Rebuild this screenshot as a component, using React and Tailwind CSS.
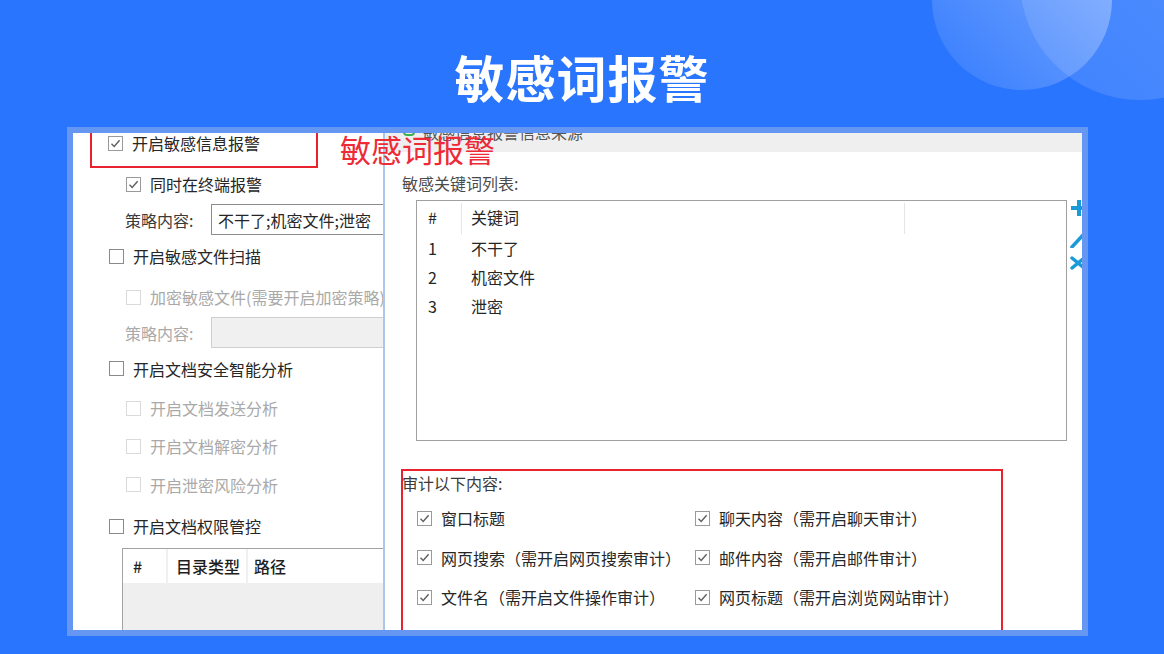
import React from "react";

const font = { fontFamily: '"Noto Sans CJK SC", "Noto Sans", sans-serif' };

function Box({ checked, disabled }) {
  const border = disabled ? "border-[#dadada]" : checked ? "border-[#9a9a9a]" : "border-[#8a8a8a]";
  return (
    <div className={`w-[15px] h-[15px] shrink-0 border bg-white flex items-center justify-center ${border}`}>
      {checked && (
        <svg width="11" height="11" viewBox="0 0 11 11">
          <path d="M1.5 5.8 L4.2 8.4 L9.6 2.2" fill="none" stroke="#5f5f5f" strokeWidth="1.4" />
        </svg>
      )}
    </div>
  );
}

function Check({ label, checked, disabled, className = "" }) {
  return (
    <div className={`flex items-center gap-[9px] ${className}`}>
      <Box checked={checked} disabled={disabled} />
      <span className={`text-[16px] whitespace-nowrap ${disabled ? "text-[#a9a9a9]" : "text-[#262626]"}`}>{label}</span>
    </div>
  );
}

export default function App() {
  return (
    <div className="relative w-[1164px] h-[654px] overflow-hidden bg-[#2a75fe]" style={font}>
      {/* decorative circles */}
      <div className="absolute left-[1020px] top-[-140px] w-[240px] h-[240px] rounded-full bg-linear-to-tr from-white/10 to-white/20" />
      <div className="absolute left-[932px] top-[-90px] w-[180px] h-[180px] rounded-full bg-linear-to-tr from-white/5 to-white/40" />

      <div className="relative flex flex-col">
        <h1 className="mt-[51px] h-[50px] self-center text-[50px] leading-[50px] font-bold text-white tracking-[1px]">敏感词报警</h1>

        {/* screenshot frame */}
        <div className="mt-[26px] ml-[67px] w-[1021px] border-[6px] border-[#6596f1]">
          <div className="relative flex h-[497px] overflow-hidden bg-white">
            {/* left panel */}
            <div className="w-[310px] shrink-0 overflow-hidden flex flex-col">
              <div className="-mt-[6px] ml-[17px] w-[228px] h-[41px] shrink-0 border-2 border-[#e8232e] flex items-center pl-[16px] pb-[9px]">
                <Check label="开启敏感信息报警" checked />
              </div>
              <Check label="同时在终端报警" checked className="h-[32px] pl-[53px] shrink-0" />
              <div className="mt-[4px] h-[31px] shrink-0 flex items-center pl-[52px]">
                <span className="w-[86px] shrink-0 whitespace-nowrap text-[16px] text-[#3a3a3a]">策略内容:</span>
                <div className="w-[300px] h-[31px] shrink-0 border border-[#8d8d8d] flex items-center pl-[6px] text-[16px] text-[#262626] whitespace-nowrap">
                  不干了;机密文件;泄密
                </div>
              </div>
              <Check label="开启敏感文件扫描" className="h-[42px] pl-[36px] shrink-0" />
              <Check label="加密敏感文件(需要开启加密策略)" disabled className="h-[40px] pl-[53px] shrink-0" />
              <div className="h-[31px] shrink-0 flex items-center pl-[52px]">
                <span className="w-[86px] shrink-0 whitespace-nowrap text-[16px] text-[#a9a9a9]">策略内容:</span>
                <div className="w-[300px] h-[31px] shrink-0 border border-[#cfcfcf] bg-[#f0f0f0]" />
              </div>
              <Check label="开启文档安全智能分析" className="h-[41px] pl-[36px] shrink-0" />
              <Check label="开启文档发送分析" disabled className="h-[38px] pl-[53px] shrink-0" />
              <Check label="开启文档解密分析" disabled className="h-[38px] pl-[53px] shrink-0" />
              <Check label="开启泄密风险分析" disabled className="h-[39px] pl-[53px] shrink-0" />
              <Check label="开启文档权限管控" className="h-[44px] pl-[36px] shrink-0" />
              <div className="ml-[49px] w-[400px] flex-1 border-l border-t border-[#a3a3a3] flex flex-col">
                <div className="h-[34px] flex bg-white text-[16px] text-[#1e1e1e] font-medium">
                  <div className="w-[45px] pl-[10px] flex items-center border-r-2 border-[#f0f0f0]">#</div>
                  <div className="w-[80px] pl-[8px] flex items-center border-r-2 border-[#f0f0f0]">目录类型</div>
                  <div className="pl-[6px] flex items-center">路径</div>
                </div>
                <div className="flex-1 bg-[#efefef]" />
              </div>
            </div>

            {/* right dialog */}
            <div className="flex-1 border-l-2 border-[#a9c9ec] flex flex-col">
              <div className="h-[19px] shrink-0 bg-[#efefef] overflow-hidden flex">
                <div className="ml-[18px] -mt-[9px] w-[12px] h-[12px] border-2 border-[#3bb04a] rounded-sm" />
                <div className="ml-[8px] -mt-[13px] text-[16px] text-[#555] whitespace-nowrap">敏感信息报警信息来源</div>
              </div>
              <div className="mt-[18px] h-[26px] shrink-0 flex items-center pl-[17px] text-[16px] text-[#4a4a4a]">敏感关键词列表:</div>
              <div className="mt-[4px] flex shrink-0">
                <div className="ml-[31px] w-[651px] h-[241px] border border-[#a0a0a0] text-[16px] text-[#262626]">
                  <div className="h-[32px] flex">
                    <div className="w-[44px] pl-[11px] flex items-center">#</div>
                    <div className="w-[1px] h-[31px] mt-[2px] bg-[#e5e5e5]" />
                    <div className="w-[442px] pl-[9px] flex items-center">关键词</div>
                    <div className="w-[1px] h-[31px] mt-[2px] bg-[#e5e5e5]" />
                  </div>
                  {[["1", "不干了"], ["2", "机密文件"], ["3", "泄密"]].map(([n, t]) => (
                    <div key={n} className="h-[29px] flex items-center">
                      <div className="w-[45px] pl-[11px]">{n}</div>
                      <div className="pl-[9px]">{t}</div>
                    </div>
                  ))}
                </div>
                <div className="ml-[3px] flex flex-col">
                  <svg width="18" height="16" viewBox="0 0 18 16">
                    <path d="M1 8 H17 M9 0 V16" stroke="#1a9ad8" strokeWidth="4" />
                  </svg>
                  <svg className="mt-[16px]" width="18" height="16" viewBox="0 0 18 16">
                    <path d="M2 15 L14 2" stroke="#1a9ad8" strokeWidth="3.5" strokeLinecap="round" />
                  </svg>
                  <svg className="mt-[8px]" width="18" height="14" viewBox="0 0 18 14">
                    <path d="M2 2 L14 12 M14 2 L2 12" stroke="#1a9ad8" strokeWidth="3.5" strokeLinecap="round" />
                  </svg>
                </div>
              </div>
              <div className="mt-[28px] ml-[16px] w-[602px] flex-1 border-2 border-b-0 border-[#e8232e]">
                <div className="mt-[2px] h-[20px] flex items-center -ml-[1px] text-[16px] text-[#3a3a3a]">审计以下内容:</div>
                <div className="mt-[5px] grid grid-cols-[278px_1fr] pl-[14px]">
                  <Check label="窗口标题" checked className="h-[40px]" />
                  <Check label="聊天内容（需开启聊天审计）" checked className="h-[40px]" />
                  <Check label="网页搜索（需开启网页搜索审计）" checked className="h-[39px]" />
                  <Check label="邮件内容（需开启邮件审计）" checked className="h-[39px]" />
                  <Check label="文件名（需开启文件操作审计）" checked className="h-[40px]" />
                  <Check label="网页标题（需开启浏览网站审计）" checked className="h-[40px]" />
                </div>
              </div>
            </div>

            {/* red annotation overlay */}
            <div className="absolute left-[267px] top-0 text-[31px] leading-[32px] text-[#ee2a36] whitespace-nowrap">敏感词报警</div>
          </div>
        </div>
      </div>
    </div>
  );
}
